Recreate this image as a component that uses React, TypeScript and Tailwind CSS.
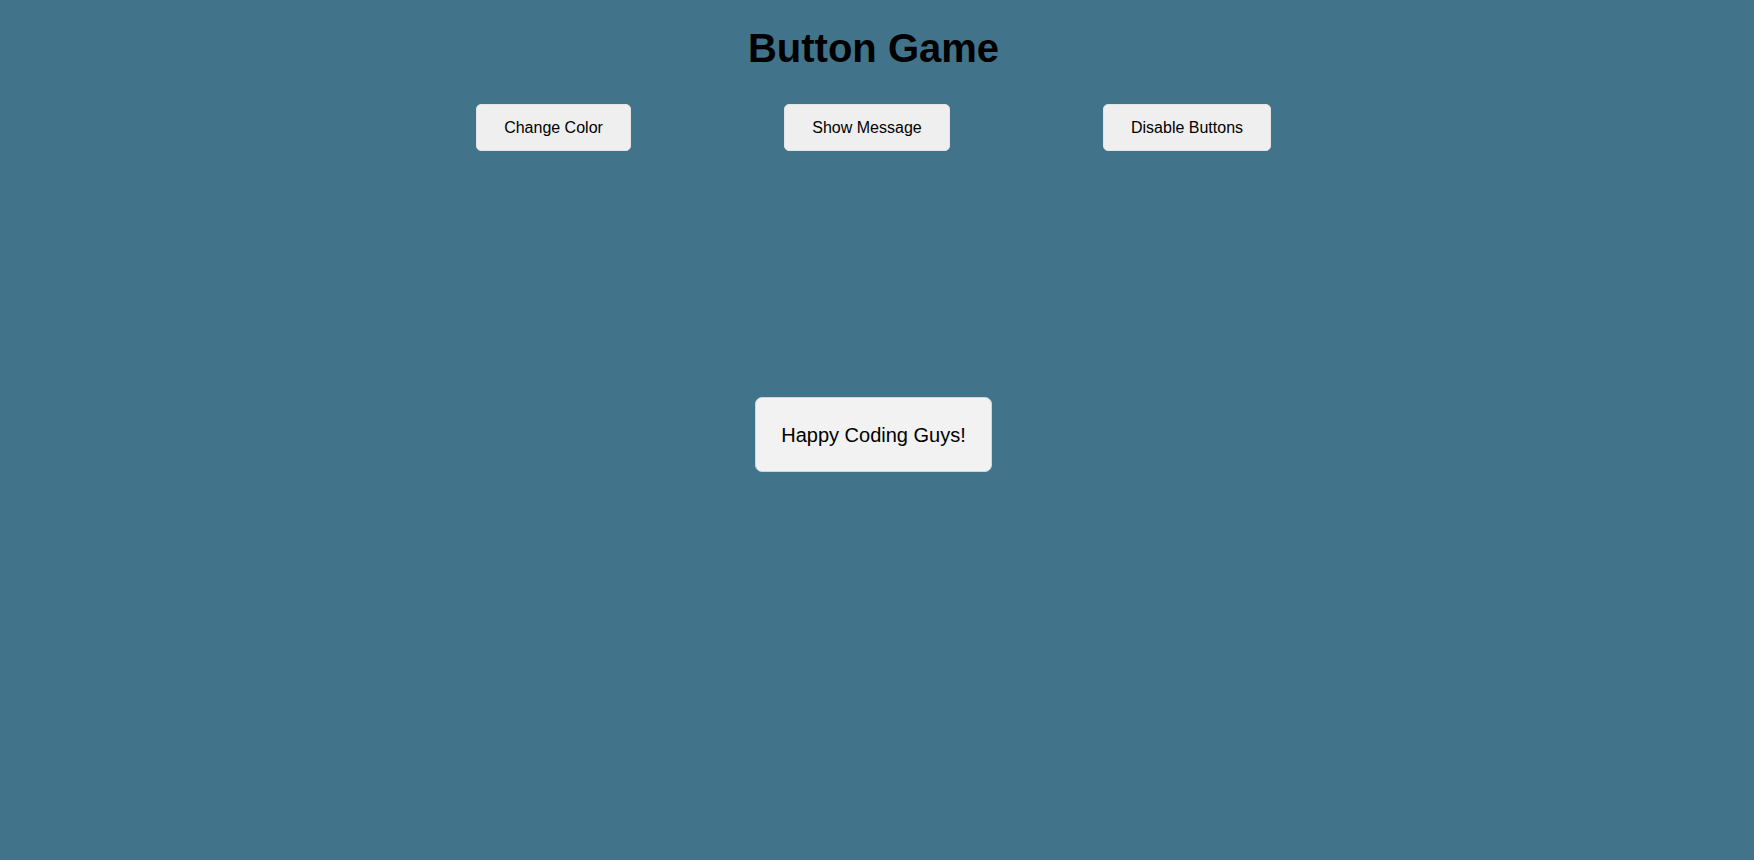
export default function App() {
  return (
    <div className="min-h-[860px] bg-[#41748b] pr-[7px] font-['Liberation_Sans',Arial,sans-serif] text-black">
      <div className="flex flex-col items-center pt-[25px]">
        <h1 className="text-[40px] font-bold leading-[46px]">Button Game</h1>

        <div className="mt-[33px] flex gap-[153px]">
          <button className="h-[47px] w-[155px] rounded-[5px] border border-[#e4e4e4] bg-[#efefef] text-[16px]">
            Change Color
          </button>
          <button className="h-[47px] w-[166px] rounded-[5px] border border-[#e4e4e4] bg-[#efefef] text-[16px]">
            Show Message
          </button>
          <button className="h-[47px] w-[168px] rounded-[5px] border border-[#e4e4e4] bg-[#efefef] text-[16px]">
            Disable Buttons
          </button>
        </div>

        {/* message */}
        <div className="mt-[246px] flex h-[75px] w-[237px] items-center justify-center rounded-[7px] border border-[#cfd6da] bg-[#f2f2f2] text-[20px]">
          Happy Coding Guys!
        </div>
      </div>
    </div>
  );
}
